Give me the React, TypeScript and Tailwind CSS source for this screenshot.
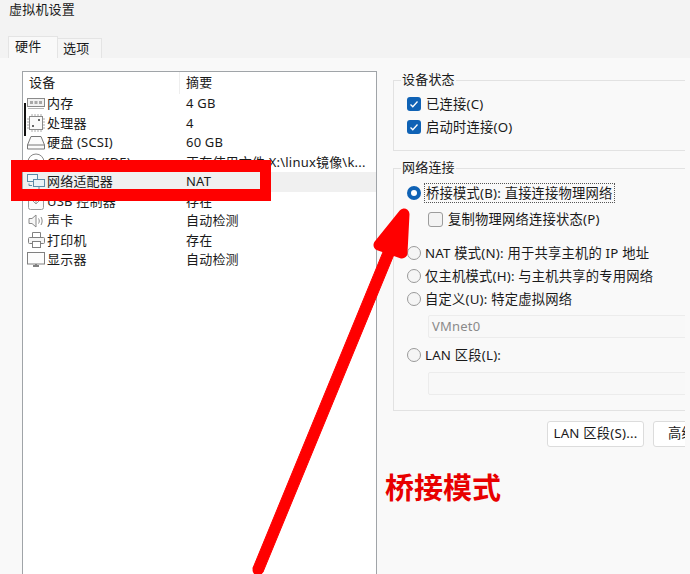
const font = "[font-family:'Noto_Sans','Noto_Sans_CJK_SC',sans-serif]";

const devices = [
  { name: "内存", value: "4 GB", icon: <MemoryIcon /> },
  { name: "处理器", value: "4", icon: <CpuIcon /> },
  { name: "硬盘 (SCSI)", value: "60 GB", icon: <DiskIcon /> },
  { name: "CD/DVD (IDE)", value: "正在使用文件 X:\\linux镜像\\k...", icon: <CdIcon /> },
  { name: "网络适配器", value: "NAT", icon: <NetIcon />, selected: true },
  { name: "USB 控制器", value: "存在", icon: <UsbIcon /> },
  { name: "声卡", value: "自动检测", icon: <SoundIcon /> },
  { name: "打印机", value: "存在", icon: <PrinterIcon /> },
  { name: "显示器", value: "自动检测", icon: <MonitorIcon /> },
];

function MemoryIcon() {
  return (
    <svg width="18" height="14" viewBox="0 0 18 14" fill="none" stroke="#8a8a8a">
      <rect x="0.5" y="1.5" width="17" height="8" fill="#f2f2f2" />
      <rect x="3" y="4" width="3" height="3" fill="#a8a8a8" stroke="none" />
      <rect x="7.5" y="4" width="3" height="3" fill="#a8a8a8" stroke="none" />
      <rect x="12" y="4" width="3" height="3" fill="#a8a8a8" stroke="none" />
      <path d="M1 11.5h16" stroke="#b5b5b5" />
    </svg>
  );
}

function CpuIcon() {
  return (
    <svg width="18" height="18" viewBox="0 0 18 18" fill="none" stroke="#8a8a8a">
      <rect x="2.5" y="2.5" width="13" height="13" fill="#fafafa" />
      <path d="M5 0v2M8 0v2M11 0v2M14 0v2M5 16v2M8 16v2M11 16v2M14 16v2M0 5h2M0 8h2M0 11h2M0 14h2M16 5h2M16 8h2M16 11h2M16 14h2" stroke="#aaa" />
      <rect x="11" y="5" width="2" height="2" fill="#666" stroke="none" />
      <rect x="5" y="11" width="2" height="2" fill="#666" stroke="none" />
    </svg>
  );
}

function DiskIcon() {
  return (
    <svg width="18" height="15" viewBox="0 0 18 15" fill="none" stroke="#777">
      <path d="M4 1.5h10l3.5 8.5v4H.5v-4z" fill="#fbfbfb" />
      <path d="M.5 10h17" />
    </svg>
  );
}

function CdIcon() {
  return (
    <svg width="18" height="18" viewBox="0 0 18 18" fill="none" stroke="#888">
      <circle cx="9" cy="9" r="8" />
      <circle cx="9" cy="9" r="2.5" />
    </svg>
  );
}

function NetIcon() {
  return (
    <svg width="18" height="16" viewBox="0 0 18 16" fill="none" stroke="#5f8ba8">
      <rect x="0.5" y="0.5" width="10" height="7" fill="#f4f8fb" />
      <rect x="6.5" y="5.5" width="11" height="7" fill="#eaf2f7" />
      <path d="M2 9.5v2h3M12 13v2M9 15.5h6" />
    </svg>
  );
}

function UsbIcon() {
  return (
    <svg width="16" height="17" viewBox="0 0 16 17" fill="none" stroke="#999">
      <rect x="0.5" y="0.5" width="15" height="16" rx="2" fill="#fafafa" />
      <path d="M8 4v7M5 8l3 3 3-3" />
    </svg>
  );
}

function SoundIcon() {
  return (
    <svg width="16" height="14" viewBox="0 0 16 14" fill="none" stroke="#8a8a8a">
      <path d="M1 4.5h3l4-3.5v12l-4-3.5H1z" fill="#f6f6f6" />
      <path d="M10.5 4.5c1 1.5 1 3.5 0 5M13 3c1.5 2.5 1.5 5.5 0 8" />
    </svg>
  );
}

function PrinterIcon() {
  return (
    <svg width="17" height="16" viewBox="0 0 17 16" fill="none" stroke="#808080">
      <path d="M4.5 5V.5h8V5" />
      <rect x="0.5" y="5.5" width="16" height="6" rx="1" fill="#f5f5f5" />
      <rect x="4.5" y="9.5" width="8" height="6" fill="#fff" />
    </svg>
  );
}

function MonitorIcon() {
  return (
    <svg width="18" height="16" viewBox="0 0 18 16" fill="none" stroke="#808080">
      <rect x="0.5" y="0.5" width="17" height="11.5" fill="#fcfcfc" />
      <path d="M6 14h6M9 12v2" strokeWidth="2" />
    </svg>
  );
}

function Checkbox({ checked }: { checked?: boolean }) {
  return checked ? (
    <span className="flex h-[14px] w-[14px] shrink-0 items-center justify-center rounded-[3px] bg-[#0f62b5]">
      <svg width="10" height="10" viewBox="0 0 10 10" fill="none" stroke="#fff" strokeWidth="1.3">
        <path d="M1.5 5.5l2.3 2.2L8.5 2.5" />
      </svg>
    </span>
  ) : (
    <span className="h-[15px] w-[15px] shrink-0 rounded-[3px] border border-[#9c9c9c] bg-[#f3f3f3]" />
  );
}

function Radio({ checked }: { checked?: boolean }) {
  return checked ? (
    <span className="flex h-[14px] w-[14px] shrink-0 items-center justify-center rounded-full bg-[#0f62b5]">
      <span className="h-[6px] w-[6px] rounded-full bg-white" />
    </span>
  ) : (
    <span className="h-[14px] w-[14px] shrink-0 rounded-full border border-[#9a9a9a] bg-[#f5f5f5]" />
  );
}

function Group({ title, className, children }: { title: string; className: string; children: React.ReactNode }) {
  return (
    <fieldset className={`relative w-[320px] border border-r-0 border-[#e2e2e2] ${className}`}>
      <span className="absolute left-[7px] top-[-12px] bg-[#f9f9f9] px-px text-[13px] leading-[20px] text-[#1a1a1a]">
        {title}
      </span>
      {children}
    </fieldset>
  );
}

function Field({ value }: { value?: string }) {
  return (
    <div className="ml-[34px] h-[23px] w-[280px] rounded-[2px] border border-[#ececec] bg-[#f8f8f8] pl-[3px] text-[13px] leading-[20px] text-[#8a8a8a]">
      {value}
    </div>
  );
}

function RadioRow({ label, className, checked }: { label: React.ReactNode; className: string; checked?: boolean }) {
  return (
    <div className={`flex items-center gap-[4px] pl-[13px] text-[13.3px] leading-[20px] text-[#1a1a1a] ${className}`}>
      <Radio checked={checked} />
      {label}
    </div>
  );
}

export default function App() {
  return (
    <div className={`${font} relative flex h-[574px] w-[690px] flex-col overflow-hidden bg-[#f9f9f9] tracking-[0.2px]`}>
      <div className="h-[36px] bg-[#f3f3f3] pl-[9px] text-[13px] leading-[18px] text-[#1a1a1a]">虚拟机设置</div>

      <div className="flex h-[22px] items-end bg-[#f3f3f3] pl-[8px] text-[13px] text-[#1a1a1a]">
        <div className="h-[22px] w-[50px] border border-b-0 border-[#e4e4e4] bg-[#f9f9f9] pl-[6px] leading-[19px]">硬件</div>
        <div className="h-[20px] w-[44px] border border-b-0 border-l-0 border-[#e4e4e4] bg-[#f6f6f6] pl-[5px] leading-[19px]">选项</div>
      </div>

      <div className="flex min-h-0 flex-1 pt-[13px]">
        <div className="ml-[22px] flex w-[355px] flex-col border border-b-0 border-[#a0a4a8] bg-white text-[13px] text-[#1a1a1a]">
          <div className="flex h-[22px] shrink-0">
            <div className="w-[157px] border-r border-[#eeeeee] pl-[6px] leading-[21px]">设备</div>
            <div className="pl-[6px] leading-[21px]">摘要</div>
          </div>
          {devices.map((d) => (
            <div
              key={d.name}
              className={`flex h-[19.5px] shrink-0 items-center ${d.selected ? "bg-[#f0f0f0]" : ""}`}
            >
              <div className="flex w-[18px] shrink-0 translate-x-[4px] justify-center">{d.icon}</div>
              <div className="w-[139px] pl-[6px] leading-[19px]">{d.name}</div>
              <div className="pl-[6px] leading-[19px]">{d.value}</div>
            </div>
          ))}
        </div>

        <div className="ml-[16px] w-[292px] overflow-hidden pt-[9px]">
          <Group title="设备状态" className="h-[71px]">
            <div className="flex items-center gap-[5px] pl-[13px] pt-[13px] text-[13.3px] leading-[20px] text-[#1a1a1a]">
              <Checkbox checked />
              已连接(C)
            </div>
            <div className="flex items-center gap-[5px] pl-[13px] pt-[3px] text-[13.3px] leading-[20px] text-[#1a1a1a]">
              <Checkbox checked />
              启动时连接(O)
            </div>
          </Group>

          <Group title="网络连接" className="mt-[17px] h-[243px]">
            <RadioRow className="pt-[14px]" checked label={<span className="-ml-[1px] border border-dotted border-[#555] px-px leading-[18px]">桥接模式(B): 直接连接物理网络</span>} />
            <div className="flex items-center gap-[5px] pl-[34px] pt-[6px] text-[13.3px] leading-[20px] text-[#1a1a1a]">
              <Checkbox />
              复制物理网络连接状态(P)
            </div>
            <RadioRow className="pt-[14px]" label="NAT 模式(N): 用于共享主机的 IP 地址" />
            <RadioRow className="pt-[3px]" label="仅主机模式(H): 与主机共享的专用网络" />
            <RadioRow className="pt-[3px]" label="自定义(U): 特定虚拟网络" />
            <div className="pt-[6px]"><Field value="VMnet0" /></div>
            <RadioRow className="pt-[7px]" label="LAN 区段(L):" />
            <div className="pt-[7px]"><Field /></div>
          </Group>

          <div className="flex w-[340px] gap-[9px] pl-[154px] pt-[10px] text-[13.3px] text-[#1a1a1a]">
            <div className="flex h-[26px] w-[97px] shrink-0 items-center justify-center rounded-[3px] border border-[#dcdcdc] bg-white">LAN 区段(S)...</div>
            <div className="h-[26px] w-[90px] shrink-0 rounded-[3px] border border-[#dcdcdc] bg-white pl-[14px] leading-[23px]">高级(V)...</div>
          </div>
        </div>
      </div>

      {/* 红色标注 */}
      <div className="absolute left-[385px] top-[470px] whitespace-nowrap text-[29px] font-bold leading-[36px] tracking-normal text-[#e80000]">桥接模式</div>
      <div className="absolute left-[24px] top-[103px] h-[33px] w-[2px] bg-[#111]" />
      <div className="absolute left-[11px] top-[160px] h-[41px] w-[260px] border-x-[11px] border-y-[12px] border-[#ff0000]" />
      <svg className="absolute left-0 top-0" width="690" height="574" fill="#ff0000" stroke="#ff0000" strokeLinecap="round" strokeLinejoin="round">
        <path d="M253 568L383 252L395 252L263 572Z" strokeWidth="1" />
        <circle cx="258" cy="570" r="5.5" strokeWidth="0" />
        <path d="M379 245L404 214L402 253Z" strokeWidth="11" />
      </svg>
    </div>
  );
}
